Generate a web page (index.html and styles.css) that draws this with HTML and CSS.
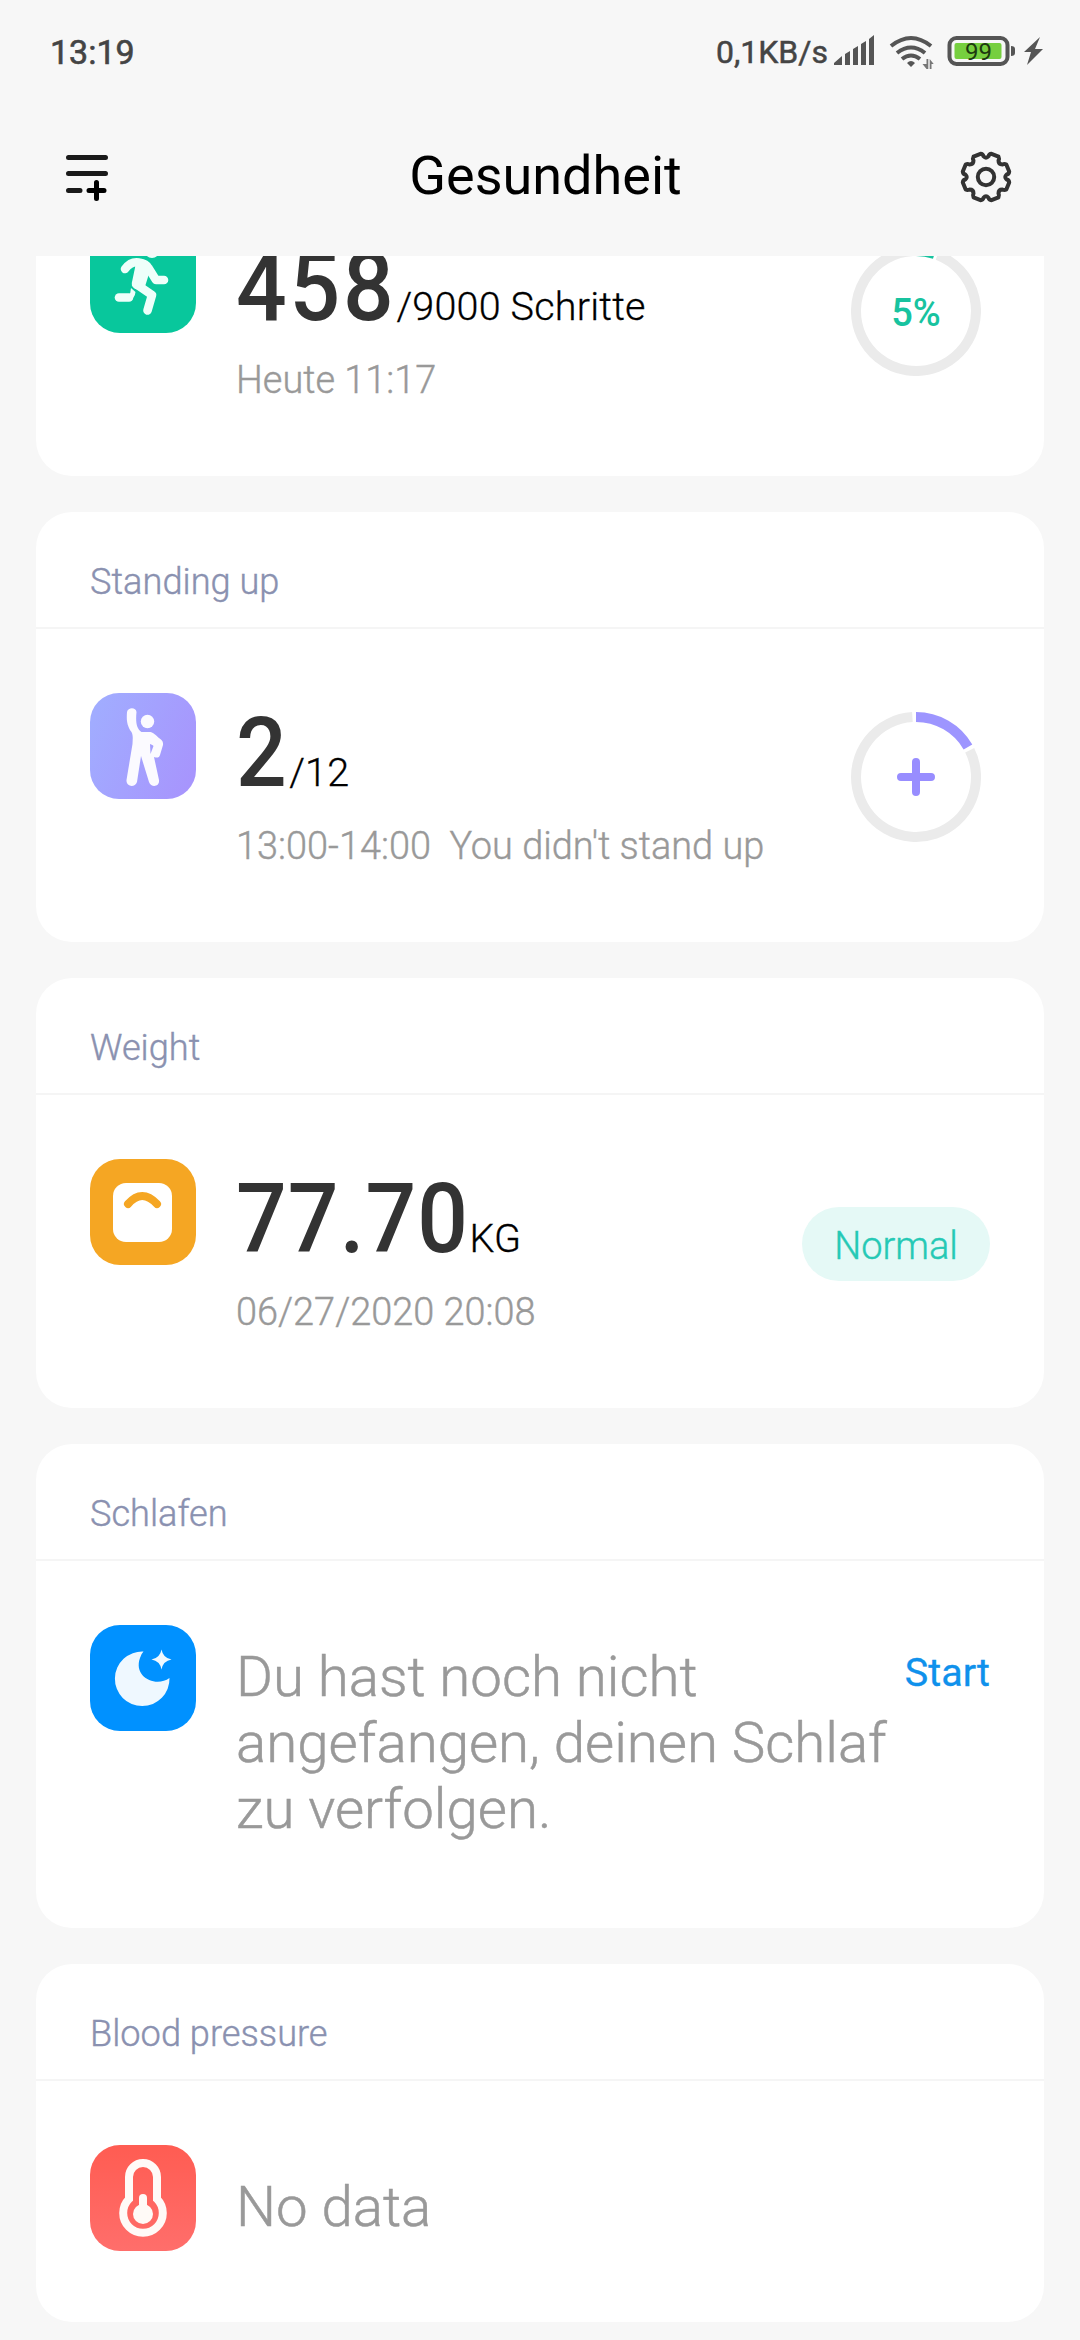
FILE: index.html
```html
<!DOCTYPE html>
<html lang="de">
<head>
<meta charset="utf-8">
<title>Gesundheit</title>
<link rel="stylesheet" href="styles.css">
</head>
<body>
<div class="screen">
  <header class="top">
    <div class="status">
      <span class="clock">13:19</span>
      <span class="speed">0,1KB/s</span>
      <svg class="status-icons" width="212" height="40" viewBox="0 0 212 40">
        <path fill="#555" d="M2 32v-2l8-7v9zM13 32V21l5-3v14zM21 32V16l5-3v19zM29 32V11l5-3v24zM37 32V6l5-4v30z"/>
        <g fill="none" stroke="#555" stroke-width="4">
          <path d="M59 13q20-16 40 0M65 20q14-11 28 0M70 26q9-7 18 0"/>
        </g>
        <path d="M75 30q4-4 8 0l-4 4z" fill="#555"/>
        <path d="M94.500 26h1.800v10h-1.800l-4-5h4zM97.700 36V26l4 5h-2.200v5z" fill="#777"/>
        <rect x="117.500" y="5" width="58" height="26" rx="7" fill="none" stroke="#555" stroke-width="4"/>
        <rect x="122.500" y="10" width="47" height="16" rx="2" fill="#76cf3f"/>
        <path d="M179 13q4 0 4 3v4q0 3-4 3z" fill="#555"/>
        <text class="battery-text" x="146.500" y="26.500" text-anchor="middle">99</text>
        <path d="M208 4l-16 15h7l-4 13 16-16h-8z" fill="#555"/>
      </svg>
    </div>
    <nav class="bar">
      <svg width="48" height="52" viewBox="0 0 48 52" fill="none" stroke="#1a1a1a" stroke-width="5" stroke-linecap="round">
        <path d="M2.500 6.500h37M2.500 22.500h37M2.500 39.500H14"/>
        <path d="M23 39.500h15M30.500 31.500v16" stroke="#000"/>
      </svg>
      <h1 class="title">Gesundheit</h1>
      <svg width="54" height="54" viewBox="-27 -27 54 54" fill="none" stroke="#333" stroke-width="4" stroke-linejoin="round">
        <circle r="8.200"/>
        <path d="M-5.500-23.200 Q-3-23-2.500-20.700Q0-17.800 2.500-20.700Q3-23 5.500-23.200L12.500-20.300Q13.500-18.500 12.500-16.400Q12.500-12.500 16.400-12.500Q18.500-13.500 20.300-12.500L23.200-5.500Q23-3 20.700-2.500Q17.800 0 20.700 2.500Q23 3 23.200 5.500L20.300 12.500Q18.500 13.500 16.400 12.500Q12.500 12.500 12.500 16.400Q13.500 18.500 12.500 20.300L5.500 23.200Q3 23 2.500 20.700Q0 17.800-2.500 20.700Q-3 23-5.500 23.200L-12.500 20.300Q-13.500 18.500-12.500 16.400Q-12.500 12.500-16.400 12.500Q-18.500 13.500-20.300 12.500L-23.200 5.500Q-23 3-20.700 2.500Q-17.800 0-20.700-2.500Q-23-3-23.200-5.500L-20.300-12.500Q-18.500-13.500-16.400-12.500Q-12.500-12.500-12.500-16.400Q-13.500-18.500-12.500-20.300Z"/>
      </svg>
    </nav>
  </header>

  <main class="list">
    <section class="card card-steps">
      <div class="head"></div>
      <div class="body">
        <svg class="icon" viewBox="0 0 106 106">
          <rect width="106" height="106" rx="30" fill="#08c79c"/>
          <g fill="none" stroke="#eefffa" stroke-width="8.600" stroke-linecap="round" stroke-linejoin="round">
            <circle cx="62" cy="23.500" r="7.500" fill="#eefffa" stroke="none"/>
            <path d="M35 42q6-8 14-6.500 7 1 9.500 5.500l7.500 12h8"/>
            <path d="M50 38l-4 19 16 11-4.500 15.500"/>
            <path d="M52 39l4 3-5 16-4 0 3-18z"/>
            <path d="M29 70.500h10"/>
            <path d="M39 74q6-3 6.500-9l-4.500-4q0 5-3 9z" fill="#eefffa" stroke="none"/>
          </g>
        </svg>
        <div class="info">
          <p class="value"><b class="three">458</b><span>/9000 Schritte</span></p>
          <p class="note">Heute 11:17</p>
        </div>
        <svg class="ring" viewBox="-65 -65 130 130">
          <path d="M0-60A60 60 0 0 1 18.540-57.060" stroke="#18c39f"/>
          <path d="M21.500-56.010A60 60 0 1 1-3.140-59.920" stroke="#ebebeb"/>
          <text class="ring-text" x="0" y="14.500" text-anchor="middle">5%</text>
        </svg>
      </div>
    </section>

    <section class="card">
      <h2 class="head">Standing up</h2>
      <div class="body">
        <svg class="icon" viewBox="0 0 106 106">
          <defs><linearGradient id="violet" x1="0" y1=".3" x2="1" y2=".7"><stop offset="0" stop-color="#a1acff"/><stop offset="1" stop-color="#a795fd"/></linearGradient></defs>
          <rect width="106" height="106" rx="29" fill="url(#violet)"/>
          <g fill="#fbfaff">
            <circle cx="57.500" cy="28.500" r="6.700"/>
            <path fill-rule="evenodd" d="M37 19c1-5 9-5 9.500 0-1 10 0 17 5 20h9c4 1 7 5 11 8q2 2 1.500 5l-3 10c-1 3-3 3-6 2l5 23c1 7-8 8-10 2l-8-26-4 26c-2 6-11 5-10.500-2l6-36c0-4 1-8-1-12-5-7-5-13-4.500-20zM60 51l.5 10 3-8q-.5-1-3.500-2z"/>
          </g>
        </svg>
        <div class="info">
          <p class="value"><b class="one">2</b><span>/12</span></p>
          <p class="note">13:00-14:00&nbsp; You didn't stand up</p>
        </div>
        <svg class="ring" viewBox="-65 -65 130 130">
          <path d="M0-60A60 60 0 0 1 51.960-30" stroke="#9d95ff"/>
          <path d="M53.700-26.800A60 60 0 1 1-3.600-59.900" stroke="#ebebeb"/>
          <path class="plus" d="M-15 0H15M0-15V15" stroke="#988dff"/>
        </svg>
      </div>
    </section>

    <section class="card">
      <h2 class="head">Weight</h2>
      <div class="body">
        <svg class="icon" viewBox="0 0 106 106">
          <rect width="106" height="106" rx="30" fill="#f5a623"/>
          <rect x="23" y="24" width="59" height="59" rx="13" fill="#fff"/>
          <path d="M38 45q14-16 29 0" fill="none" stroke="#f5a623" stroke-width="8" stroke-linecap="round"/>
        </svg>
        <div class="info">
          <p class="value"><b class="decimal">77.70</b><span>KG</span></p>
          <p class="note">06/27/2020 20:08</p>
        </div>
        <span class="pill">Normal</span>
      </div>
    </section>

    <section class="card card-sleep">
      <h2 class="head">Schlafen</h2>
      <div class="body">
        <svg class="icon" viewBox="0 0 106 106">
          <rect width="106" height="106" rx="30" fill="#0091ff"/>
          <path d="M53.500 26.500A27.300 27.300 0 1 0 79.500 53C66 63 43 52 50 33Q51 29 53.500 26.500z" fill="#eff8ff"/>
          <path d="M71.500 24.500q1.500 8.500 10 10-8.500 1.500-10 10-1.500-8.500-10-10 8.500-1.500 10-10z" fill="#eff8ff"/>
        </svg>
        <p class="message">Du hast noch nicht<br>angefangen, deinen Schlaf<br>zu verfolgen.</p>
        <a class="start">Start</a>
      </div>
    </section>

    <section class="card card-pressure">
      <h2 class="head">Blood pressure</h2>
      <div class="body">
        <svg class="icon" viewBox="0 0 106 106">
          <defs><linearGradient id="coral" x1="0" y1="0" x2="0" y2="1"><stop offset="0" stop-color="#ff5c52"/><stop offset="1" stop-color="#ff6e6b"/></linearGradient></defs>
          <rect width="106" height="106" rx="30" fill="url(#coral)"/>
          <path d="M39 54V32a14 14 0 0 1 28 0V54A19.800 19.800 0 1 1 39 54z" fill="none" stroke="#fffaf7" stroke-width="8"/>
          <circle cx="53" cy="69" r="10" fill="#fffaf7"/>
          <path d="M53 53v12" stroke="#fffaf7" stroke-width="8" stroke-linecap="round"/>
        </svg>
        <p class="message">No data</p>
      </div>
    </section>
  </main>
</div>
</body>
</html>
```

FILE: styles.css
```css
* { box-sizing: border-box; margin: 0; padding: 0; }

body {
  background: #f7f7f7;
  font-family: Roboto, "Noto Sans", sans-serif;
  color: #000;
}

.screen {
  width: 1080px;
  height: 2340px;
  overflow: hidden;
  display: flex;
  flex-direction: column;
}

.top { height: 256px; flex: none; }

.status {
  height: 104px;
  padding: 33px 36px 0 50px;
  display: flex;
  align-items: flex-start;
  color: #444;
}

.clock {
  font-size: 34px;
  line-height: 39px;
  font-weight: 400;
  -webkit-text-stroke: .6px #444;
  flex: 1;
}

.speed {
  font-size: 32px;
  line-height: 38px;
  margin-right: 4px;
  -webkit-text-stroke: .5px #444;
}

.status-icons { flex: none; }

.battery-text { font-size: 24px; fill: #1d3a10; }

.bar {
  height: 152px;
  padding: 0 67px 6px 66px;
  display: flex;
  align-items: center;
  justify-content: space-between;
}

.title {
  margin-left: 18px;
  font-size: 54px;
  line-height: 62px;
  padding-bottom: 2px;
  font-weight: 400;
}

/* The list is scrolled, so the first card is cut off under the header. */
.list {
  flex: 1;
  min-height: 0;
  overflow: hidden;
  padding: 0 36px;
  display: flex;
  flex-direction: column;
  gap: 36px;
}

.card {
  flex: none;
  height: 430px;
  border-radius: 36px;
  background: #fff;
}

.card-steps { margin-top: -210px; }
.card-sleep { height: 484px; }
.card-pressure { height: 358px; }

.head {
  height: 117px;
  padding: 49px 54px 0;
  border-bottom: 2px solid #f5f5f5;
  font-size: 36.200px;
  line-height: 42px;
  font-weight: 300;
  color: #8a91b0;
  -webkit-text-stroke: .4px #8a91b0;
}

.body {
  display: flex;
  align-items: flex-start;
  padding: 0 54px;
}

.icon {
  width: 106px;
  height: 106px;
  margin-top: 64px;
  margin-right: 40px;
  flex: none;
}

.info { flex: 1; padding-top: 74px; }

.value {
  display: flex;
  align-items: baseline;
  line-height: 100px;
}

/* Narrow figures: the margin takes back the width that the scaling frees. */
.value b {
  font-size: 97px;
  font-weight: 500;
  letter-spacing: 3px;
  color: #333;
  transform: scaleX(.92);
  transform-origin: left;
}

.value .one { margin-right: -5px; }
.value .three { margin-right: -14px; }
.value .decimal { letter-spacing: 1.200px; margin-right: -20px; }

.value span {
  font-size: 39.500px;
  line-height: 40px;
  font-weight: 300;
  letter-spacing: .2px;
  -webkit-text-stroke: .3px #000;
}

.note {
  margin-top: 21px;
  font-size: 37.900px;
  line-height: 44px;
  font-weight: 300;
  color: #999;
  -webkit-text-stroke: .4px #999;
}

.ring {
  width: 130px;
  height: 130px;
  margin-top: 83px;
  margin-right: 9px;
  flex: none;
  fill: none;
  stroke-width: 10px;
}

.plus { stroke-width: 8px; stroke-linecap: round; }

.ring-text {
  font-size: 38px;
  font-weight: 500;
  fill: #18c39f;
}

.pill {
  margin-top: 112px;
  width: 188px;
  height: 74px;
  border-radius: 37px;
  background: #e5f9f6;
  color: #25c9b5;
  font-size: 38px;
  font-weight: 300;
  line-height: 79px;
  text-align: center;
  -webkit-text-stroke: .4px #25c9b5;
}

.message {
  flex: 1;
  padding-top: 83px;
  font-size: 56.400px;
  line-height: 66px;
  font-weight: 300;
  color: #999;
  white-space: nowrap;
  -webkit-text-stroke: .5px #999;
}

.card-pressure .message { padding-top: 93px; }

.start {
  margin-top: 88px;
  font-size: 39.500px;
  line-height: 47px;
  font-weight: 400;
  color: #0f91ec;
  -webkit-text-stroke: .3px #0f91ec;
}
```
